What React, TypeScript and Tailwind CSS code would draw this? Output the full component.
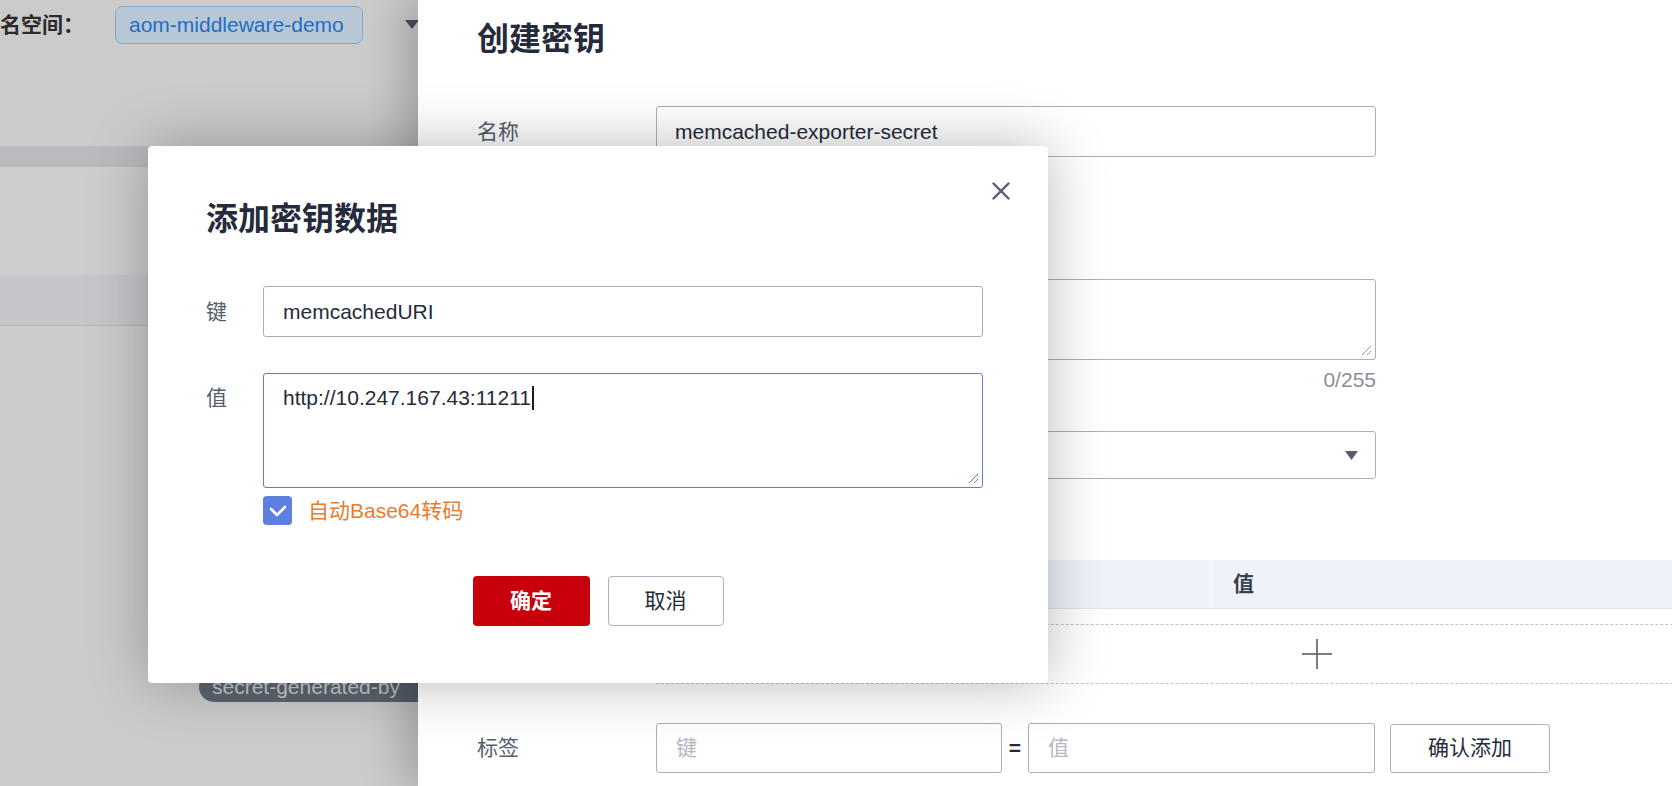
import React from "react";

function Caret() {
  return <span className="inline-block w-[2px] h-[24px] bg-[#1b1b1b] align-middle ml-[1px]" />;
}

function ResizeHandle({ color }: { color: string }) {
  return (
    <svg width="12" height="12" viewBox="0 0 12 12" className="absolute right-[3px] bottom-[3px]">
      <line x1="11" y1="2" x2="2" y2="11" stroke={color} strokeWidth="1" />
      <line x1="11" y1="7" x2="7" y2="11" stroke={color} strokeWidth="1" />
    </svg>
  );
}

function LeftBackground() {
  return (
    <div className="w-[418px] shrink-0 flex flex-col bg-[#cbcbcb] overflow-hidden">
      <div className="h-[146px] shrink-0">
        <div className="h-[50px] flex items-center">
          <span className="text-[21px] font-bold text-[#2b2b2b] whitespace-nowrap">名空间：</span>
          <div className="ml-[31px] w-[248px] h-[38px] shrink-0 rounded-[7px] border border-[#80a9d0] bg-[#b8c7d5] flex items-center pl-[13px]">
            <span className="text-[21px] text-[#1f6ec4] whitespace-nowrap">aom-middleware-demo</span>
          </div>
          <svg width="14" height="9" viewBox="0 0 14 9" className="ml-[42px] shrink-0 -mt-[2px]">
            <path d="M0 0 L14 0 L7 9 Z" fill="#4b4f58" />
          </svg>
        </div>
      </div>
      <div className="h-[21px] shrink-0 bg-[#b9bbbf]" />
      <div className="h-[108px] shrink-0 bg-[#cdcdcd]" />
      <div className="h-[51px] shrink-0 bg-[#c4c6c9] border-b border-[#b1b3b7]" />
      <div className="flex-1 pt-[346px] pl-[199px]">
        <div className="h-[30px] rounded-l-[15px] bg-[#5c6570] flex items-center pl-[13px] pr-[20px] whitespace-nowrap">
          <span className="text-[21px] leading-[24px] text-[#c6cace]">secret-generated-by</span>
        </div>
      </div>
    </div>
  );
}

function Drawer() {
  return (
    <div className="relative z-10 flex-1 min-w-0 bg-white shadow-[-14px_0_40px_rgba(0,0,0,0.22)] pl-[59px] pt-[19px] flex flex-col">
      <h1 className="text-[32px] leading-[40px] font-bold text-[#252b3a]">创建密钥</h1>

      <div className="mt-[47px] flex items-center">
        <div className="w-[179px] shrink-0 text-[21px] leading-[24px] text-[#575d6c]">名称</div>
        <div className="w-[720px] h-[51px] shrink-0 rounded-[3px] border border-[#adb0b8] flex items-center pl-[18px]">
          <span className="text-[21px] text-[#252b3a] whitespace-nowrap">memcached-exporter-secret</span>
        </div>
      </div>

      <div className="mt-[122px] flex items-start">
        <div className="w-[179px] shrink-0" />
        <div className="relative w-[720px] h-[81px] shrink-0 rounded-[3px] border border-[#adb0b8]">
          <ResizeHandle color="#9a9ea6" />
        </div>
      </div>
      <div className="ml-[179px] mt-[8px] w-[720px] text-right text-[21px] leading-[24px] text-[#8a8e99]">0/255</div>

      <div className="mt-[39px] flex items-center">
        <div className="w-[179px] shrink-0" />
        <div className="w-[720px] h-[48px] shrink-0 rounded-[3px] border border-[#adb0b8] flex items-center justify-end pr-[17px]">
          <svg width="13" height="9" viewBox="0 0 13 9">
            <path d="M0 0 L13 0 L6.5 9 Z" fill="#575d6c" />
          </svg>
        </div>
      </div>

      <div className="mt-[81px] ml-[179px] w-[1322px] shrink-0">
        <div className="h-[49px] bg-[#eef3fb] border-b border-[#dfe3ea] flex">
          <div className="w-[556px] shrink-0 border-r border-white" />
          <div className="flex-1 flex items-center pl-[21px] text-[21px] font-bold text-[#3a3f4d]">值</div>
        </div>
        <div className="mt-[15px] h-[60px] border-y border-dashed border-[#c0c4ca] flex items-center justify-center">
          <svg width="30" height="30" viewBox="0 0 30 30">
            <line x1="0" y1="15" x2="30" y2="15" stroke="#575d6c" strokeWidth="1.6" />
            <line x1="15" y1="0" x2="15" y2="30" stroke="#575d6c" strokeWidth="1.6" />
          </svg>
        </div>
      </div>

      <div className="mt-[39px] flex items-center">
        <div className="w-[179px] shrink-0 text-[21px] leading-[24px] text-[#575d6c]">标签</div>
        <div className="w-[346px] h-[50px] shrink-0 rounded-[3px] border border-[#adb0b8] flex items-center pl-[19px]">
          <span className="text-[21px] text-[#b4b8bf]">键</span>
        </div>
        <div className="w-[26px] shrink-0 text-center text-[21px] font-bold text-[#252b3a]">=</div>
        <div className="w-[347px] h-[50px] shrink-0 rounded-[3px] border border-[#adb0b8] flex items-center pl-[19px]">
          <span className="text-[21px] text-[#b4b8bf]">值</span>
        </div>
        <div className="ml-[15px] w-[160px] h-[49px] shrink-0 rounded-[3px] border border-[#adb0b8] flex items-center justify-center">
          <span className="text-[21px] text-[#252b3a]">确认添加</span>
        </div>
      </div>
    </div>
  );
}

function Modal() {
  return (
    <div className="absolute left-[148px] top-[146px] z-20 w-[900px] h-[537px] bg-white rounded-[4px] shadow-[0_0_60px_rgba(0,0,0,0.28)] flex flex-col pt-[53px]">
      <svg width="18" height="18" viewBox="0 0 18 18" className="absolute left-[844px] top-[36px]">
        <line x1="1.5" y1="1.5" x2="16.5" y2="16.5" stroke="#575d6c" strokeWidth="2.4" strokeLinecap="round" />
        <line x1="16.5" y1="1.5" x2="1.5" y2="16.5" stroke="#575d6c" strokeWidth="2.4" strokeLinecap="round" />
      </svg>

      <h2 className="ml-[58px] text-[32px] leading-[40px] font-bold text-[#252b3a]">添加密钥数据</h2>

      <div className="ml-[58px] mt-[47px] flex items-center">
        <div className="w-[57px] shrink-0 text-[21px] leading-[24px] text-[#575d6c]">键</div>
        <div className="w-[720px] h-[51px] shrink-0 rounded-[3px] border border-[#a9adb6] flex items-center pl-[19px]">
          <span className="text-[21px] text-[#252b3a]">memcachedURI</span>
        </div>
      </div>

      <div className="ml-[58px] mt-[36px] flex items-start">
        <div className="w-[57px] shrink-0 mt-[13px] text-[21px] leading-[24px] text-[#575d6c]">值</div>
        <div className="relative w-[720px] h-[115px] shrink-0 rounded-[3px] border border-[#5e7ce0] pl-[19px] pt-[12px]">
          <div className="text-[21px] leading-[24px] text-[#252b3a] whitespace-nowrap flex items-center">
            <span>http://10.247.167.43:11211</span>
            <Caret />
          </div>
          <ResizeHandle color="#5e7ce0" />
        </div>
      </div>

      <div className="ml-[115px] mt-[8px] flex items-center">
        <div className="w-[29px] h-[29px] shrink-0 rounded-[4px] bg-[#5d7fe0] flex items-center justify-center">
          <svg width="18" height="14" viewBox="0 0 18 14">
            <path d="M2 5 L8 11 L16 3" fill="none" stroke="white" strokeWidth="2.6" strokeLinecap="round" strokeLinejoin="round" />
          </svg>
        </div>
        <span className="ml-[16px] text-[21px] leading-[24px] text-[#e97b2c]">自动Base64转码</span>
      </div>

      <div className="mt-[51px] flex justify-center gap-[18px]">
        <div className="w-[117px] h-[50px] rounded-[4px] bg-[#c7000b] flex items-center justify-center">
          <span className="text-[21px] font-semibold text-white">确定</span>
        </div>
        <div className="w-[116px] h-[50px] rounded-[4px] border border-[#adb1b9] flex items-center justify-center">
          <span className="text-[21px] text-[#252b3a]">取消</span>
        </div>
      </div>
    </div>
  );
}

export default function App() {
  return (
    <div className="relative w-[1672px] h-[786px] overflow-hidden flex bg-[#cbcbcb] font-['Liberation_Sans','Noto_Sans_CJK_SC',sans-serif]">
      <LeftBackground />
      <Drawer />
      <Modal />
    </div>
  );
}
